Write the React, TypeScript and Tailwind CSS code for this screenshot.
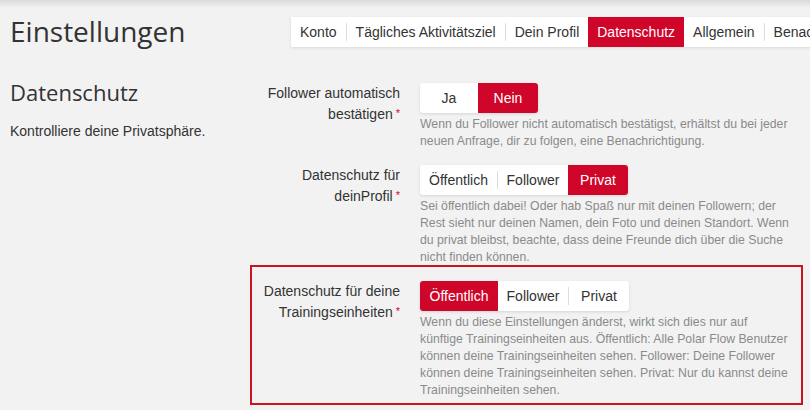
import React from "react";

const RED = "bg-[#d0052a]";

type Opt = { label: string; w: string };

function Segmented({ options, active }: { options: Opt[]; active: number }) {
  return (
    <div className="flex h-[30px] w-fit overflow-hidden rounded-[3px] bg-white shadow-[0_1px_3px_rgba(0,0,0,0.12)]">
      {options.map((o, i) => {
        const isActive = i === active;
        const showSep = i > 0 && !isActive && i - 1 !== active;
        return (
          <div key={o.label} className="flex items-center">
            {showSep && <div className="h-[18px] w-px bg-[#dddddd]" />}
            <div
              className={`flex h-[30px] items-center justify-center text-[14px] ${o.w} ${
                isActive ? `${RED} text-white` : "text-[#333333]"
              }`}
            >
              {o.label}
            </div>
          </div>
        );
      })}
    </div>
  );
}

function Label({ lines }: { lines: string[] }) {
  return (
    <div className="text-right text-[14px] leading-[20px] text-[#333333]">
      {lines.map((l, i) => (
        <div key={i}>
          {l}
          {i === lines.length - 1 && <span className="ml-[3px] align-[2px] text-[11px] text-[#d0052a]">*</span>}
        </div>
      ))}
    </div>
  );
}

// lines are broken as in the original layout
function Help({ lines }: { lines: string[] }) {
  return (
    <p className="mt-[3px] w-[380px] text-[12.25px] leading-[17px] text-[#8a8a8a]">
      {lines.map((l, i) => (
        <span key={i} className="block whitespace-nowrap">
          {l}
        </span>
      ))}
    </p>
  );
}

const tabs = ["Konto", "Tägliches Aktivitätsziel", "Dein Profil", "Datenschutz", "Allgemein", "Benachrichtigungen"];
const activeTab = 3;

export default function App() {
  return (
    <div className="relative h-[410px] w-[810px] overflow-hidden bg-[#f2f2f2] font-['Liberation_Sans',Arial,sans-serif]">
      {/* shadow from the header above */}
      <div className="absolute left-0 right-0 top-0 h-[8px] bg-linear-to-b from-black/10 to-transparent" />

      {/* Header */}
      <div className="flex items-start pt-[17px]">
        <h1 className="w-[291px] shrink-0 pl-[10px] font-['Open_Sans',sans-serif] text-[28px] leading-[28px] text-[#333333]">
          Einstellungen
        </h1>
        <div className="flex h-[30px] shrink-0 items-center whitespace-nowrap bg-white shadow-[0_1px_3px_rgba(0,0,0,0.1)]">
          {tabs.map((t, i) => {
            const isActive = i === activeTab;
            const showSep = i > 0 && !isActive && i - 1 !== activeTab;
            return (
              <div key={t} className="flex items-center">
                {showSep && <div className="h-[18px] w-px bg-[#dddddd]" />}
                <div
                  className={`flex h-[30px] items-center px-[9px] text-[14px] ${
                    isActive ? `${RED} text-white` : "text-[#333333]"
                  }`}
                >
                  {t}
                </div>
              </div>
            );
          })}
        </div>
      </div>

      {/* Body */}
      <div className="mt-[36px] flex">
        <div className="w-[250px] shrink-0 pl-[10px]">
          <h2 className="-mt-[2px] font-['Open_Sans',sans-serif] text-[22px] leading-[22px] text-[#333333]">
            Datenschutz
          </h2>
          <p className="mt-[18px] text-[14px] leading-[20px] text-[#333333]">Kontrolliere deine Privatsphäre.</p>
        </div>

        <div className="flex flex-col">
          <div className="flex gap-[20px]">
            <div className="w-[150px] shrink-0">
              <Label lines={["Follower automatisch", "bestätigen"]} />
            </div>
            <div>
              <Segmented
                options={[
                  { label: "Ja", w: "w-[58px]" },
                  { label: "Nein", w: "w-[60px]" },
                ]}
                active={1}
              />
              <Help
                lines={[
                  "Wenn du Follower nicht automatisch bestätigst, erhältst du bei jeder",
                  "neuen Anfrage, dir zu folgen, eine Benachrichtigung.",
                ]}
              />
            </div>
          </div>

          <div className="mt-[15px] flex gap-[20px]">
            <div className="w-[150px] shrink-0">
              <Label lines={["Datenschutz für", "deinProfil"]} />
            </div>
            <div>
              <Segmented
                options={[
                  { label: "Öffentlich", w: "w-[77px]" },
                  { label: "Follower", w: "w-[70px]" },
                  { label: "Privat", w: "w-[60px]" },
                ]}
                active={2}
              />
              <Help
                lines={[
                  "Sei öffentlich dabei! Oder hab Spaß nur mit deinen Followern; der",
                  "Rest sieht nur deinen Namen, dein Foto und deinen Standort. Wenn",
                  "du privat bleibst, beachte, dass deine Freunde dich über die Suche",
                  "nicht finden können.",
                ]}
              />
            </div>
          </div>

          <div className="-mt-[1px] flex h-[140px] w-[553px] gap-[20px] border-2 border-[#c8161f] pt-[14px]">
            <div className="w-[148px] shrink-0">
              <Label lines={["Datenschutz für deine", "Trainingseinheiten"]} />
            </div>
            <div>
              <Segmented
                options={[
                  { label: "Öffentlich", w: "w-[78px]" },
                  { label: "Follower", w: "w-[70px]" },
                  { label: "Privat", w: "w-[60px]" },
                ]}
                active={0}
              />
              <Help
                lines={[
                  "Wenn du diese Einstellungen änderst, wirkt sich dies nur auf",
                  "künftige Trainingseinheiten aus. Öffentlich: Alle Polar Flow Benutzer",
                  "können deine Trainingseinheiten sehen. Follower: Deine Follower",
                  "können deine Trainingseinheiten sehen. Privat: Nur du kannst deine",
                  "Trainingseinheiten sehen.",
                ]}
              />
            </div>
          </div>
        </div>
      </div>
    </div>
  );
}
